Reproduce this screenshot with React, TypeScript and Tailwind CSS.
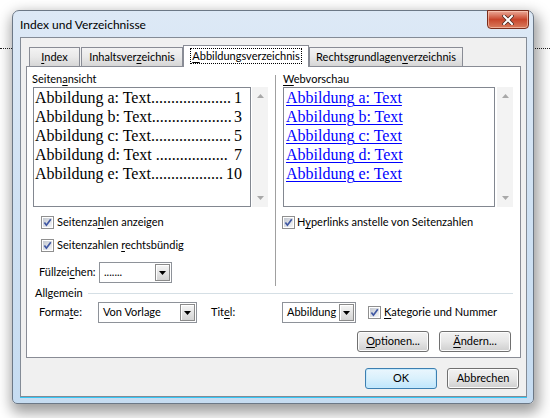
import type { ReactNode } from "react";

// dot counts chosen so each leader fills the line up to its page number
const leftEntries: [string, number, string][] = [
  ["Abbildung a: Text", 20, "1"],
  ["Abbildung b: Text", 20, "3"],
  ["Abbildung c: Text", 20, "5"],
  ["Abbildung d: Text ", 18, " 7"],
  ["Abbildung e: Text", 18, "10"],
];

const webEntries = ["Abbildung a: Text", "Abbildung b: Text", "Abbildung c: Text", "Abbildung d: Text", "Abbildung e: Text"];

function K({ children }: { children: ReactNode }) {
  return <span className="underline decoration-1 underline-offset-[2px]">{children}</span>;
}

function Check() {
  return (
    <span className="flex h-[13px] w-[13px] shrink-0 border border-[#8f8f8f] bg-white p-px">
      <span className="flex h-full w-full items-center justify-center bg-gradient-to-br from-[#c3c8d0] to-[#f5f6f8]">
        <svg viewBox="0 0 9 9" className="h-[9px] w-[9px]">
          <path d="M1.4 4.6 L3.4 7.2 L7.8 1.2" stroke="#3f57a3" strokeWidth="1.7" fill="none" />
        </svg>
      </span>
    </span>
  );
}

function Combo({ value, width }: { value: string; width: string }) {
  return (
    <div className={`flex h-[21px] items-stretch border border-[#8e9299] bg-white ${width}`}>
      <span className="flex-1 overflow-hidden whitespace-nowrap pl-[4px] leading-[18px]">{value}</span>
      <span className="m-px flex w-[15px] items-center justify-center border border-[#8a8a8a] bg-gradient-to-b from-[#f6f6f6] to-[#d4d4d4] shadow-[inset_1px_1px_0_#ffffff]">
        <svg viewBox="0 0 7 4" className="h-[4px] w-[7px]">
          <path d="M0 0 H7 L3.5 4 Z" fill="#000" />
        </svg>
      </span>
    </div>
  );
}

function Button({ children, primary }: { children: ReactNode; primary?: boolean }) {
  return (
    <div
      className={`flex h-[21px] w-[72px] items-center justify-center rounded-[3px] border ${
        primary
          ? "border-[#3c7fb1] bg-gradient-to-b from-[#eaf6fd] via-[#d9f0fc] to-[#bee6fd] shadow-[inset_0_0_0_1px_#c6e9fc]"
          : "border-[#707070] bg-gradient-to-b from-[#f2f2f2] via-[#e6e6e6] to-[#cfcfcf] shadow-[inset_0_0_0_1px_#fcfcfc]"
      }`}
    >
      {children}
    </div>
  );
}

function Scrollbar() {
  return (
    <div className="flex w-[16px] flex-col items-center justify-between bg-[#f3f3f3] py-[7px]">
      <svg viewBox="0 0 7 4" className="h-[4px] w-[7px]">
        <path d="M0 4 H7 L3.5 0 Z" fill="#a8a8a8" />
      </svg>
      <svg viewBox="0 0 7 4" className="h-[4px] w-[7px]">
        <path d="M0 0 H7 L3.5 4 Z" fill="#a8a8a8" />
      </svg>
    </div>
  );
}

function Tab({ children, width, active }: { children: ReactNode; width: string; active?: boolean }) {
  if (active) {
    return (
      <div className={`relative z-10 -mb-px flex h-[22px] items-start justify-center border border-b-0 border-[#898c95] bg-white pt-[2px] ${width}`}>
        <span className="border border-dotted border-black px-px leading-[14px]">{children}</span>
      </div>
    );
  }
  return (
    <div className={`flex h-[19px] items-center justify-center border border-b-0 border-[#898c95] bg-gradient-to-b from-[#f3f3f3] via-[#e9e9e9] to-[#d6d6d6] ${width}`}>
      {children}
    </div>
  );
}

export default function App() {
  return (
    <div className="relative h-[418px] w-[550px] overflow-hidden bg-white font-['Lato',sans-serif] text-[11px] text-black">
      <div className="absolute inset-x-0 top-[48px] border-t border-dotted border-[#222]" />
      <div className="relative z-10 ml-[12px] mt-[10px] flex h-[394px] w-[522px] flex-col rounded-b-[5px] rounded-t-[7px] border border-[#6c7886] bg-gradient-to-b from-[#dde9f6] via-[#cfe1f3] to-[#c6dcf1] shadow-[2px_6px_14px_3px_rgba(0,0,0,0.38)]">
        <div className="flex h-[26px] items-start justify-between">
          <span className="self-center pl-[7px] pt-[1px] text-[12px]">Index und Verzeichnisse</span>
          <div className="-mt-px mr-[4px] flex h-[19px] w-[42px] items-center justify-center rounded-b-[4px] border border-[#7a2d1c] bg-gradient-to-b from-[#eaa998] via-[#c8452b] to-[#d97b5d] shadow-[inset_0_0_0_1px_rgba(255,210,190,0.6)]">
            <svg viewBox="0 0 12 10" className="h-[10px] w-[12px]">
              <path d="M2 1 L10 9 M10 1 L2 9" stroke="#4a2a22" strokeWidth="3.6" strokeLinecap="square" />
              <path d="M2 1 L10 9 M10 1 L2 9" stroke="#ffffff" strokeWidth="2" strokeLinecap="square" />
            </svg>
          </div>
        </div>
        <div className="ml-[7px] mr-[6px] flex h-[360px] flex-col border border-[#838b96] bg-[#f0f0f0] shadow-[0_1px_0_#35c6f4]">
          <div className="flex items-end pl-[8px] pt-[7px]">
            <Tab width="w-[51px]"><K>I</K>ndex</Tab>
            <Tab width="ml-px w-[102px]">Inhaltsver<K>z</K>eichnis</Tab>
            <Tab width="w-[126px]" active><K>A</K>bbildungsverzeichnis</Tab>
            <Tab width="w-[154px]">Rechtsgrundlagen<K>v</K>erzeichnis</Tab>
          </div>
          <div className="mx-[5px] flex h-[292px] flex-col border border-[#898c95] bg-white">
            <div className="mt-[5px] grid h-[214px] grid-cols-[248px_1px_1fr]">
              <div className="flex flex-col pl-[5px]">
                <span className="leading-[14px]">Seiten<K>a</K>nsicht</span>
                <div className="mt-px ml-px flex h-[120px] gap-px">
                  <div className="w-[218px] border border-[#828790] bg-white pl-px pr-[8px] font-['Liberation_Serif',serif] text-[16px] leading-[19px]">
                    {leftEntries.map(([name, dots, num]) => (
                      <div key={name} className="flex justify-between whitespace-pre">
                        <span>{name + ".".repeat(dots)}</span>
                        <span>{num}</span>
                      </div>
                    ))}
                  </div>
                  <Scrollbar />
                </div>
                <label className="mt-[9px] ml-[9px] flex h-[13px] items-center gap-[3px]">
                  <Check />
                  <span>Seitenza<K>h</K>len anzeigen</span>
                </label>
                <label className="mt-[10px] ml-[9px] flex h-[13px] items-center gap-[3px]">
                  <Check />
                  <span>Seitenzahlen <K>r</K>echtsbündig</span>
                </label>
                <div className="mt-[10px] ml-[7px] flex items-center">
                  <span className="w-[60px]">Füllzei<K>c</K>hen:</span>
                  <Combo value="......." width="w-[73px]" />
                </div>
              </div>
              <div className="mt-[3px] bg-[#a0a0a0]" />
              <div className="flex flex-col pl-[7px]">
                <span className="leading-[14px]"><K>W</K>ebvorschau</span>
                <div className="mt-px flex h-[120px] gap-[2px]">
                  <div className="w-[212px] border border-[#828790] bg-white pl-[2px] font-['Liberation_Serif',serif] text-[16px] leading-[19px] text-[#0000ff]">
                    {webEntries.map((e) => (
                      <div key={e}>
                        <span className="underline decoration-1 underline-offset-[2px]">{e}</span>
                      </div>
                    ))}
                  </div>
                  <Scrollbar />
                </div>
                <label className="mt-[9px] -ml-px flex h-[13px] items-center gap-[2px]">
                  <Check />
                  <span>H<K>y</K>perlinks anstelle von Seitenzahlen</span>
                </label>
              </div>
            </div>
            <div className="flex h-[14px] items-center gap-[5px] pl-[8px] pr-[7px]">
              <span className="leading-[14px]">Allgemein</span>
              <div className="h-px flex-1 bg-[#d5dfe5]" />
            </div>
            <div className="mt-[2px] flex items-center pl-[12px]">
              <span className="w-[59px]">Forma<K>t</K>e:</span>
              <Combo value="Von Vorlage" width="w-[99px]" />
              <span className="ml-[14px] w-[71px]">Tit<K>e</K>l:</span>
              <Combo value="Abbildung" width="w-[74px]" />
              <label className="ml-[12px] flex items-center gap-[3px]">
                <Check />
                <span><K>K</K>ategorie und Nummer</span>
              </label>
            </div>
            <div className="mt-[8px] flex justify-end gap-[10px] pr-[9px]">
              <Button><span><K>O</K>ptionen...</span></Button>
              <Button><span><K>Ä</K>ndern...</span></Button>
            </div>
          </div>
          <div className="mt-[10px] flex justify-end gap-[10px] pr-[7px]">
            <Button primary>OK</Button>
            <Button>Abbrechen</Button>
          </div>
        </div>
      </div>
    </div>
  );
}
